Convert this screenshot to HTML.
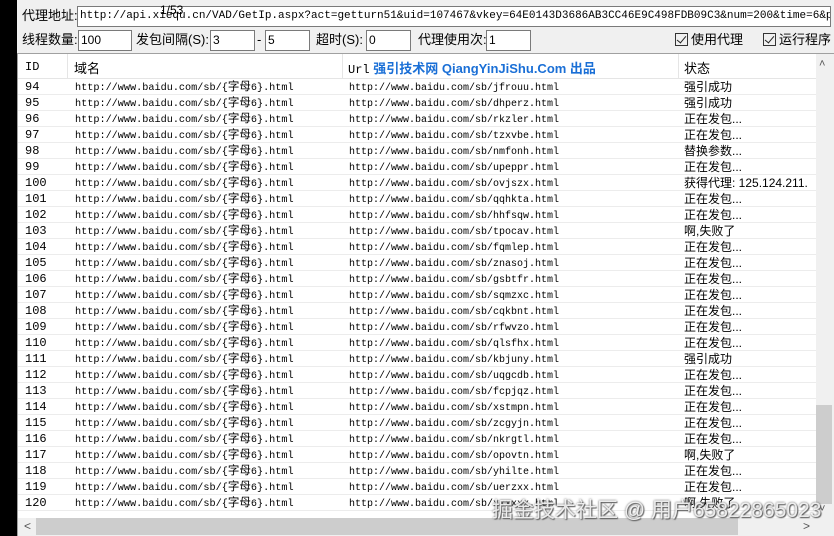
<!DOCTYPE html>
<html><head><meta charset="utf-8"><style>
*{margin:0;padding:0;box-sizing:border-box}
body{width:834px;height:536px;background:#f0f0f0;position:relative;overflow:hidden;font-family:"Liberation Sans","Noto Sans CJK SC",sans-serif;font-size:12px;color:#000}
.abs{position:absolute;white-space:nowrap}
.blk{left:0;top:0;width:17px;height:536px;background:#000}
.inp{position:absolute;background:#fff;border:1px solid #7a7a7a;height:21px;font-size:12px;line-height:19px;padding-left:2px;overflow:hidden;white-space:nowrap}
.mono{font-family:"Liberation Mono","Noto Sans CJK SC",monospace;font-size:10.2px}
.lbl{font-size:13px;line-height:20px}
.tbl{left:18px;top:54px;width:798px;height:464px;background:#fff;overflow:hidden}
.hd{position:absolute;left:0;top:0;width:798px;height:25px;border-bottom:1px solid #e5e5e5;font-size:13px}
.row{position:absolute;left:0;width:798px;height:16px;border-bottom:1px solid #ececec;line-height:17px}
.c{position:absolute;top:0}
.cj{font-size:11.5px}
.cb{display:inline-block;width:13px;height:13px;border:1px solid #333;vertical-align:-2px;margin-right:3px;position:relative}
.cb:after{content:"";position:absolute;left:3px;top:0px;width:4px;height:8px;border:solid #222;border-width:0 1.5px 1.5px 0;transform:rotate(40deg)}
</style></head><body>
<div class="abs blk"></div>
<div class="abs lbl" style="left:22px;top:6px">代理地址:</div>
<div class="inp mono" style="left:77px;top:6px;width:754px;font-size:11px">http://api.xiequ.cn/VAD/GetIp.aspx?act=getturn51&amp;uid=107467&amp;vkey=64E0143D3686AB3CC46E9C498FDB09C3&amp;num=200&amp;time=6&amp;plat=1&amp;re=0&amp;type=0</div>
<div class="abs" style="left:160px;top:3px;font-size:12px">1/53</div>
<div class="abs lbl" style="left:22px;top:30px">线程数量:</div>
<div class="inp" style="left:78px;top:30px;width:54px">100</div>
<div class="abs lbl" style="left:136px;top:30px">发包间隔(S):</div>
<div class="inp" style="left:210px;top:30px;width:45px">3</div>
<div class="abs lbl" style="left:257px;top:30px">-</div>
<div class="inp" style="left:265px;top:30px;width:45px">5</div>
<div class="abs lbl" style="left:316px;top:30px">超时(S):</div>
<div class="inp" style="left:366px;top:30px;width:45px">0</div>
<div class="abs lbl" style="left:418px;top:30px">代理使用次:</div>
<div class="inp" style="left:486px;top:30px;width:45px">1</div>
<div class="abs lbl" style="left:675px;top:30px"><span class="cb"></span>使用代理</div>
<div class="abs lbl" style="left:763px;top:30px"><span class="cb"></span>运行程序</div>
<div class="abs" style="left:17px;top:53px;width:817px;height:483px;border-left:1px solid #a0a0a0;border-top:1px solid #a0a0a0"></div>
<div class="abs tbl" id="t">
<div class="hd">
<div class="c mono" style="left:7px;top:6px;font-size:12px">ID</div>
<div class="c" style="left:49px;top:0;height:25px;border-left:1px solid #e5e5e5"></div>
<div class="c" style="left:56px;top:4px">域名</div>
<div class="c" style="left:324px;top:0;height:25px;border-left:1px solid #e5e5e5"></div>
<div class="c" style="left:330px;top:4px"><span class="mono" style="font-size:12px">Url</span> <b style="color:#1a6fd6">强引技术网 QiangYinJiShu.Com 出品</b></div>
<div class="c" style="left:660px;top:0;height:25px;border-left:1px solid #e5e5e5"></div>
<div class="c" style="left:666px;top:4px">状态</div>
</div>
</div>
<div class="abs" style="left:816px;top:55px;width:16px;height:463px;background:#f0f0f0"></div>
<div class="abs" style="left:819px;top:58px;font-size:11px;color:#555">˄</div>
<div class="abs" style="left:816px;top:405px;width:16px;height:99px;background:#cdcdcd"></div>
<div class="abs" style="left:819px;top:503px;font-size:11px;color:#555">˅</div>
<div class="abs" style="left:18px;top:518px;width:798px;height:17px;background:#f0f0f0"></div>
<div class="abs" style="left:24px;top:519px;font-size:12px;color:#555">&lt;</div>
<div class="abs" style="left:36px;top:518px;width:702px;height:17px;background:#cdcdcd"></div>
<div class="abs" style="left:803px;top:519px;font-size:12px;color:#555">&gt;</div>
<div class="abs" style="left:492px;top:494px;font-size:21px;color:rgba(255,255,255,0.85);text-shadow:0 0 2px #555,1px 1px 1px #666">掘金技术社区 @ 用户65822865023</div>
<script>
var s=["jfrouu","dhperz","rkzler","tzxvbe","nmfonh","upeppr","ovjszx","qqhkta","hhfsqw","tpocav","fqmlep","znasoj","gsbtfr","sqmzxc","cqkbnt","rfwvzo","qlsfhx","kbjuny","uqgcdb","fcpjqz","xstmpn","zcgyjn","nkrgtl","opovtn","yhilte","uerzxx","xxxxxx"];
var st=["强引成功","强引成功","正在发包...","正在发包...","替换参数...","正在发包...","获得代理: 125.124.211.","正在发包...","正在发包...","啊,失败了","正在发包...","正在发包...","正在发包...","正在发包...","正在发包...","正在发包...","正在发包...","强引成功","正在发包...","正在发包...","正在发包...","正在发包...","正在发包...","啊,失败了","正在发包...","正在发包...","啊,失败了"];
var h="";
for(var i=0;i<27;i++){var y=25+i*16;
h+='<div class="row" style="top:'+y+'px"><div class="c mono" style="left:7px;font-size:12px">'+(94+i)+'</div><div class="c mono" style="left:57px">http://www.baidu.com/sb/{<span class="cj">字母</span>6}.html</div><div class="c mono" style="left:331px;top:1px;font-size:10px">http://www.baidu.com/sb/'+s[i]+'.html</div><div class="c" style="left:666px">'+st[i]+'</div></div>';}
document.getElementById("t").insertAdjacentHTML("beforeend",h);
</script>
</body></html>
